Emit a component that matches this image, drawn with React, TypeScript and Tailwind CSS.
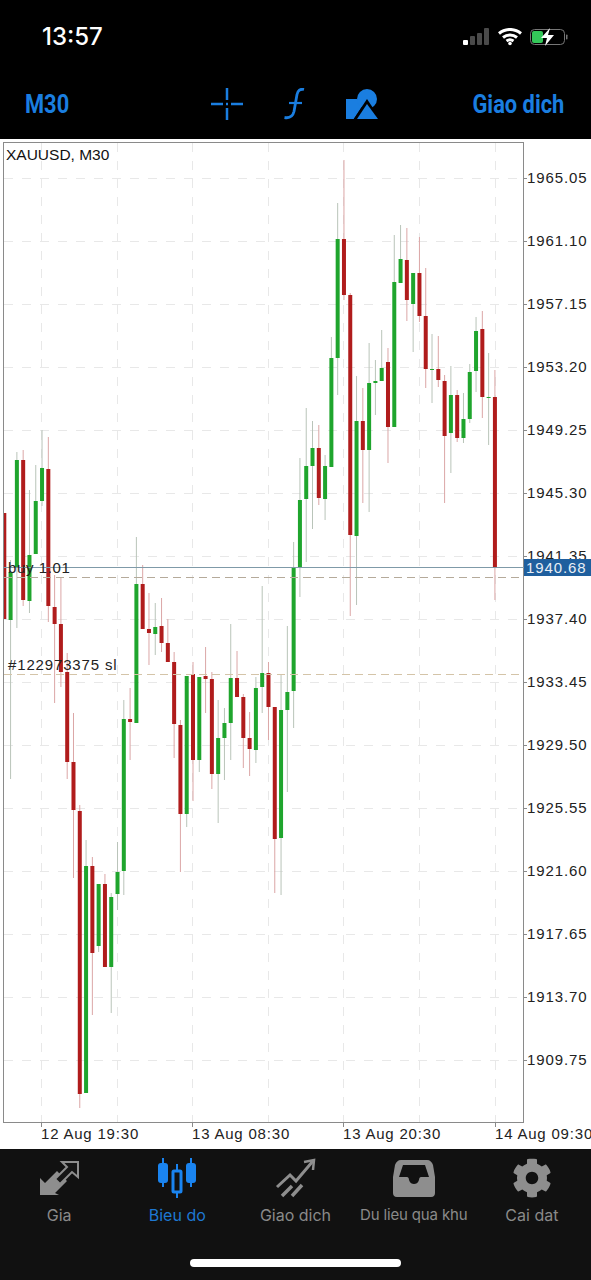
import { FaCog } from 'react-icons/fa'

type Candle = [dir: 'g' | 'r', top: number, bottom: number, wickTop: number, wickBottom: number]

// one row per bar, left to right, in page pixels
const candles: Candle[] = [
  ['r', 513, 619, 513, 619], ['g', 572, 620, 560, 779], ['g', 460, 567, 452, 628], ['r', 460, 600, 450, 606],
  ['g', 555, 601, 490, 613], ['g', 501, 554, 465, 554], ['g', 468, 501, 430, 506], ['r', 469, 606, 437, 622],
  ['r', 607, 624, 575, 703], ['r', 624, 672, 577, 687], ['r', 672, 762, 653, 779], ['r', 762, 810, 713, 878],
  ['r', 811, 1094, 805, 1108], ['g', 866, 1093, 840, 1093], ['r', 866, 953, 857, 1015], ['g', 884, 946, 884, 952],
  ['r', 884, 967, 874, 967], ['g', 897, 967, 893, 1013], ['g', 872, 894, 842, 910], ['g', 719, 871, 700, 895],
  ['r', 719, 722, 688, 760], ['g', 584, 723, 537, 723], ['r', 584, 629, 565, 629], ['r', 629, 633, 593, 665],
  ['g', 627, 634, 603, 655], ['r', 626, 643, 598, 652], ['r', 643, 662, 619, 662], ['r', 662, 724, 652, 758],
  ['r', 725, 814, 720, 872], ['g', 676, 814, 676, 827], ['r', 674, 760, 662, 801], ['g', 677, 760, 677, 772],
  ['r', 676, 679, 647, 713], ['r', 679, 774, 672, 789], ['g', 738, 774, 700, 823], ['g', 723, 738, 708, 780],
  ['g', 678, 723, 624, 760], ['r', 678, 697, 651, 697], ['r', 697, 738, 694, 768], ['r', 738, 749, 712, 776],
  ['g', 688, 750, 677, 763], ['g', 673, 687, 586, 713], ['r', 673, 707, 662, 740], ['r', 707, 839, 707, 893],
  ['g', 710, 838, 674, 895], ['g', 692, 710, 626, 792], ['g', 568, 691, 542, 728], ['g', 500, 568, 458, 597],
  ['g', 466, 499, 408, 562], ['g', 448, 466, 421, 529], ['r', 448, 498, 425, 505], ['g', 466, 499, 455, 520],
  ['g', 358, 467, 337, 467], ['g', 239, 358, 203, 395], ['r', 239, 295, 160, 300], ['r', 295, 535, 293, 616],
  ['g', 421, 536, 376, 605], ['r', 421, 450, 388, 503], ['g', 383, 450, 343, 512], ['g', 381, 383, 360, 415],
  ['g', 368, 381, 330, 381], ['r', 362, 427, 348, 463], ['g', 282, 427, 235, 427], ['g', 259, 283, 225, 283],
  ['r', 260, 300, 228, 321], ['g', 273, 304, 273, 352], ['r', 273, 316, 237, 322], ['r', 316, 369, 268, 388],
  ['g', 369, 370, 334, 403], ['r', 369, 380, 336, 387], ['r', 381, 436, 375, 503], ['g', 395, 433, 366, 473],
  ['r', 395, 438, 390, 442], ['g', 419, 438, 393, 443], ['g', 372, 419, 364, 423], ['g', 331, 371, 317, 392],
  ['r', 329, 397, 311, 418], ['g', 397, 398, 353, 445], ['r', 397, 567, 370, 600],
]

const prices = [
  '1965.05', '1961.10', '1957.15', '1953.20', '1949.25', '1945.30', '1941.35', '1937.40',
  '1933.45', '1929.50', '1925.55', '1921.60', '1917.65', '1913.70', '1909.75',
]

const gridX = [41, 117, 192, 268, 343, 419, 495]
const timeLabels: [number, string][] = [
  [41, '12 Aug 19:30'],
  [192, '13 Aug 08:30'],
  [343, '13 Aug 20:30'],
  [495, '14 Aug 09:30'],
]

function Chart() {
  return (
    <svg viewBox="0 139 591 1010" className="block h-[1010px] w-[591px] bg-white font-['Liberation_Sans',sans-serif]">
      {prices.map((_, i) => (
        <line key={i} x1={4} x2={523} y1={178.5 + i * 63} y2={178.5 + i * 63} stroke="#e8e8e8" strokeDasharray="9 9" />
      ))}
      {gridX.map((x) => (
        <line key={x} x1={x + 0.5} x2={x + 0.5} y1={143} y2={1123} stroke="#e8e8e8" strokeDasharray="9 9" />
      ))}

      {candles.map(([dir, top, bottom, wickTop, wickBottom], i) => {
        const x = 4.3 + i * 6.29
        return (
          <g key={i}>
            <line x1={x} x2={x} y1={wickTop} y2={wickBottom} stroke={dir === 'g' ? '#b9c4b9' : '#dba6a6'} />
            <rect
              x={i === 0 ? x - 1 : x - 2}
              y={top}
              width={i === 0 ? 3 : 4}
              height={bottom - top}
              fill={dir === 'g' ? '#1fa52d' : '#b01c1c'}
            />
          </g>
        )
      })}

      <rect x={3.5} y={142.5} width={520} height={980} fill="none" stroke="#8a8a8a" />

      {prices.map((p, i) => (
        <g key={p}>
          <line x1={523} x2={527} y1={178.5 + i * 63} y2={178.5 + i * 63} stroke="#8a8a8a" />
          <text x={527} y={182.5 + i * 63} fontSize={15} letterSpacing={0.9} fill="#222">
            {p}
          </text>
        </g>
      ))}
      {timeLabels.map(([x, label]) => (
        <g key={label}>
          <line x1={x + 0.5} x2={x + 0.5} y1={1123} y2={1127} stroke="#8a8a8a" />
          <text x={x} y={1139} fontSize={15} letterSpacing={0.8} fill="#222">
            {label}
          </text>
        </g>
      ))}

      <line x1={4} x2={591} y1={567.5} y2={567.5} stroke="#7f9aa8" />
      <line x1={4} x2={523} y1={577.5} y2={577.5} stroke="#b5aa9a" strokeDasharray="8 5" />
      <line x1={4} x2={523} y1={674.5} y2={674.5} stroke="#d4c4a8" strokeDasharray="8 5" />
      <rect x={524} y={559} width={67} height={17} fill="#1f5f9e" />
      <text x={526} y={572.5} fontSize={15} letterSpacing={0.9} fill="#e8eef5">
        1940.68
      </text>

      <text x={6} y={160} fontSize={15.5} fill="#111">
        XAUUSD, M30
      </text>
      <text x={8} y={573} fontSize={15} letterSpacing={0.6} fill="#222">
        buy 1.01
      </text>
      <text x={8} y={670} fontSize={15} letterSpacing={0.85} fill="#222">
        #122973375 sl
      </text>
    </svg>
  )
}

function StatusIcons() {
  return (
    <svg width="112" height="24" viewBox="0 0 112 24" className="mt-[6px] shrink-0">
      <rect x="1" y="12" width="5" height="5" rx="1" fill="#fff" />
      <rect x="8" y="8" width="5" height="9" rx="1" fill="#4a4a4a" />
      <rect x="15" y="5" width="5" height="12" rx="1" fill="#4a4a4a" />
      <rect x="22" y="0" width="5" height="17" rx="1" fill="#4a4a4a" />
      <g fill="none" stroke="#fff" strokeWidth="3">
        <path d="M37 5.500a17 17 0 0 1 22 0" />
        <path d="M41 9.500a11 11 0 0 1 14 0" />
        <path d="M44.500 13a6 6 0 0 1 7 0" />
      </g>
      <circle cx="48" cy="15.500" r="1.800" fill="#fff" />
      <rect x="68.500" y="1.500" width="34" height="15" rx="4" fill="none" stroke="#777" />
      <rect x="70" y="3" width="11" height="12" rx="2" fill="#34c759" />
      <rect x="104" y="6.500" width="1.500" height="5" rx="0.700" fill="#777" />
      <path d="M88 0 79 10h6l-2 8 9-11h-6z" fill="#fff" />
    </svg>
  )
}

function NavIcons() {
  return (
    <div className="flex items-center">
      <svg width="32" height="32" viewBox="0 0 32 32" fill="none" stroke="#1a7ee0" strokeWidth="2.500">
        <path d="M16 0v12M16 20v12M0 16h12M20 16h12" />
        <path d="M15 16h2" />
      </svg>
      <svg width="24" height="32" viewBox="0 0 24 32" fill="none" stroke="#1a7ee0" className="ml-[39px]">
        <path d="M22 1.500c-4-1-6 1-7 5l-3 17c-1 4-4 7-9.500 6" strokeWidth="2.800" />
        <path d="M7 15h13" strokeWidth="2.200" />
      </svg>
      <svg width="32" height="31" viewBox="0 0 32 31" className="ml-[40px]">
        <path d="M0 10h11l6 6-9 14H0z" fill="#1a7ee0" />
        <circle cx="21" cy="10" r="10" fill="#1a7ee0" />
        <path d="M21 10 7 31h28z" fill="#000" />
        <path d="M21 15 11 30h21z" fill="#1a7ee0" />
      </svg>
    </div>
  )
}

function PriceIcon() {
  return (
    <svg width="44" height="40" viewBox="0 0 44 40">
      <path d="M3 37V20l5 5 12-12 10 10-12 12 4 2z" fill="#8e8e8e" />
      <path d="M41 4H25l5 5-12 12 5 5 12-12 6 5z" fill="#151515" stroke="#8e8e8e" strokeWidth="2" />
    </svg>
  )
}

function CandlesIcon() {
  return (
    <svg width="44" height="40" viewBox="0 0 44 40" fill="#1a84f0">
      <rect x="7" y="0" width="2" height="29" />
      <rect x="3" y="5" width="10" height="20" rx="3" />
      <rect x="35" y="0" width="2" height="29" />
      <rect x="31" y="5" width="10" height="20" rx="3" />
      <rect x="21" y="6" width="2" height="34" />
      <rect x="18" y="13" width="8" height="21" rx="1" fill="#111" stroke="#1a84f0" strokeWidth="3" />
    </svg>
  )
}

function TradeIcon() {
  return (
    <svg width="44" height="40" viewBox="0 0 44 40" fill="none" stroke="#8e8e8e" strokeWidth="3">
      <path d="M4 29l13-12 6 6 17-20" />
      <path d="M31 4l10-2-1 10" strokeWidth="2.500" />
      <path d="M9 38l10-10M19 38l10-11" strokeWidth="3.500" />
    </svg>
  )
}

function HistoryIcon() {
  return (
    <svg width="44" height="40" viewBox="0 0 44 40">
      <path
        fillRule="evenodd"
        d="M9 2h26c3 0 5 2 6 5l2 12v16c0 2-1 4-4 4H5c-3 0-4-2-4-4V19L3 7c1-3 3-5 6-5zm2 5-4 12h8c1 0 2 1 2 3 1 3 3 4 5 4s4-1 5-4c0-2 1-3 2-3h8L33 7z"
        fill="#8e8e8e"
      />
    </svg>
  )
}

const tabs = [
  { label: 'Gia', icon: <PriceIcon />, text: 'text-[16px] text-[#8a8a8a]' },
  { label: 'Bieu do', icon: <CandlesIcon />, text: 'text-[16px] text-[#1e78d2]' },
  { label: 'Giao dich', icon: <TradeIcon />, text: 'text-[16px] text-[#8a8a8a]' },
  { label: 'Du lieu qua khu', icon: <HistoryIcon />, text: 'text-[15px] tracking-[-0.15px] text-[#8a8a8a]' },
  { label: 'Cai dat', icon: <FaCog size={40} color="#8e8e8e" />, text: 'text-[16px] text-[#8a8a8a]' },
]

export default function App() {
  return (
    <div className="flex h-[1280px] w-[591px] flex-col overflow-hidden bg-black font-['Inter',sans-serif]">
      <div className="flex h-[73px] items-center justify-between pl-[42px] pr-[17px] text-white">
        <span className="text-[24px] font-medium leading-none">13:57</span>
        <StatusIcons />
      </div>
      <div className="flex h-[66px] items-center pb-[4px] pl-[25px] pr-[27px] font-['Roboto',sans-serif] text-[26px] font-bold text-[#1a7ee0]">
        <span className="w-[186px] origin-left scale-x-[0.84]">M30</span>
        <NavIcons />
        <span className="ml-auto origin-right scale-x-[0.84]">Giao dich</span>
      </div>
      <Chart />
      <div className="relative flex-1 bg-[#111]">
        <div className="grid grid-cols-5 pt-[9px]">
          {tabs.map((tab) => (
            <div key={tab.label} className="flex flex-col items-center">
              <div className="flex h-[40px] items-center justify-center">{tab.icon}</div>
              <span className={`mt-[7px] whitespace-nowrap leading-[20px] ${tab.text}`}>{tab.label}</span>
            </div>
          ))}
        </div>
        <div className="absolute bottom-[13px] left-[190px] h-[8px] w-[211px] rounded-full bg-white" />
      </div>
    </div>
  )
}
